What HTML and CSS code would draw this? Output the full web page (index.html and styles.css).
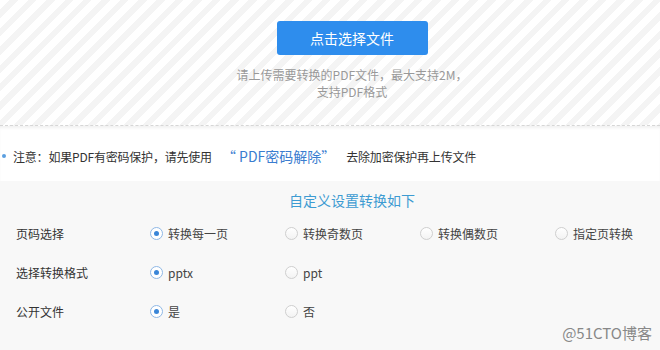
FILE: index.html
```html
<!DOCTYPE html>
<html>
<head>
<meta charset="utf-8">
<link rel="stylesheet" href="styles.css">
</head>
<body>
<div class="upload">
  <div class="upload-inner">
    <a class="pick-btn">点击选择文件</a>
    <p class="tip">请上传需要转换的PDF文件，最大支持2M，<br>支持PDF格式</p>
  </div>
</div>
<div class="notice">
  <span class="dot"></span>
  <span>注意：如果PDF有密码保护，请先使用</span>
  <a class="unlock">“ PDF密码解除”</a>
  <span>去除加密保护再上传文件</span>
</div>
<div class="settings">
  <h3 class="title">自定义设置转换如下</h3>
  <div class="row">
    <div class="label">页码选择</div>
    <label class="opt"><span class="radio on"></span>转换每一页</label>
    <label class="opt"><span class="radio"></span>转换奇数页</label>
    <label class="opt"><span class="radio"></span>转换偶数页</label>
    <label class="opt"><span class="radio"></span>指定页转换</label>
  </div>
  <div class="row">
    <div class="label">选择转换格式</div>
    <label class="opt"><span class="radio on"></span>pptx</label>
    <label class="opt"><span class="radio"></span>ppt</label>
  </div>
  <div class="row">
    <div class="label">公开文件</div>
    <label class="opt"><span class="radio on"></span>是</label>
    <label class="opt"><span class="radio"></span>否</label>
  </div>
  <div class="mark">@51CTO博客</div>
</div>
</body>
</html>
```
FILE: styles.css
```css
body {
  margin: 0;
  font-family: "Noto Sans CJK SC", "Liberation Sans", sans-serif;
  font-size: 12px;
  color: #333;
  background: #f8f8f8;
  overflow: hidden;
}

.upload {
  height: 104px;
  padding-top: 21px;
  border-bottom: 1px dashed #d6d6d6;
  background: repeating-linear-gradient(135deg, #fff 0 7px, #f4f4f4 7px 13px);
}
.upload-inner {
  padding-left: 44px;
  text-align: center;
}
.pick-btn {
  display: block;
  width: 151px;
  height: 34px;
  line-height: 34px;
  margin: 0 auto;
  background: #2e8ded;
  border-radius: 3px;
  color: #fff;
  font-size: 14px;
  cursor: pointer;
}
.tip {
  margin: 11px 0 0;
  line-height: 17px;
  color: #999;
}

.notice {
  height: 50px;
  display: flex;
  align-items: center;
  padding-top: 5px;
  background: #fff;
  box-shadow: inset 0 3px 3px -1px rgba(0,0,0,0.06);
  white-space: pre;
  letter-spacing: -0.2px;
}
.dot {
  width: 4px;
  height: 4px;
  border-radius: 50%;
  background: #5b9fe0;
  margin: 0 7px 0 2px;
}
.unlock {
  color: #3a7dcf;
  font-size: 14px;
  letter-spacing: 0;
  margin: 0 11px 0 10px;
}

.settings {
  position: relative;
  height: 170px;
  background: #f8f8f8;
  padding-top: 9px;
}
.title {
  margin: 0 0 4px;
  padding-left: 44px;
  text-align: center;
  font-size: 14px;
  font-weight: normal;
  line-height: 20px;
  color: #3d9bd2;
}
.row {
  display: flex;
  align-items: center;
  height: 39px;
}
.label {
  flex: none;
  width: 134px;
  padding-left: 16px;
}
.opt {
  flex: none;
  width: 135px;
  display: flex;
  align-items: center;
  color: #444;
}
.radio {
  width: 11px;
  height: 11px;
  border: 1px solid #cfcfcf;
  border-radius: 50%;
  background: linear-gradient(#fff, #f3f3f3);
  margin-right: 5px;
  position: relative;
}
.radio.on {
  border-color: #8fb8e6;
  background: #fff;
}
.radio.on::after {
  content: "";
  position: absolute;
  left: 3px;
  top: 3px;
  width: 5px;
  height: 5px;
  border-radius: 50%;
  background: #3a86d8;
}
.mark {
  position: absolute;
  right: 8px;
  top: 141px;
  font-size: 15px;
  color: #888;
}
```
